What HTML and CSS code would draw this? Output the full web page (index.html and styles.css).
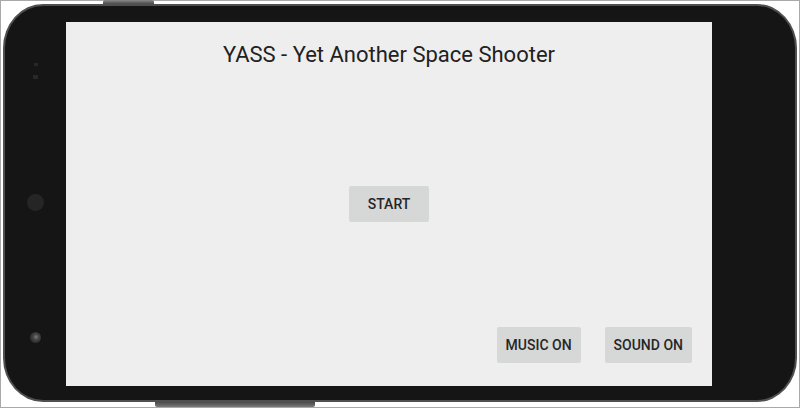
FILE: index.html
```html
<!DOCTYPE html>
<html lang="en">
<head>
<meta charset="utf-8">
<title>YASS</title>
<link rel="stylesheet" href="styles.css">
</head>
<body>
<div class="frame">
  <div class="phone">
    <span class="key key-top"></span>
    <span class="key key-bottom"></span>
    <div class="bezel-left">
      <span class="sensor sensor-a"></span>
      <span class="sensor sensor-b"></span>
      <span class="speaker"></span>
      <span class="camera"></span>
    </div>
    <div class="screen-wrap">
      <div class="screen">
        <h1 class="title">YASS - Yet Another Space Shooter</h1>
        <button class="btn btn-start">START</button>
        <div class="options">
          <button class="btn">MUSIC ON</button>
          <button class="btn">SOUND ON</button>
        </div>
      </div>
    </div>
    <div class="bezel-right"></div>
  </div>
</div>
</body>
</html>
```
FILE: styles.css
```css
* { box-sizing: border-box; }
html, body { margin: 0; padding: 0; background: #fff; }
body { width: 800px; height: 408px; overflow: hidden; font-family: Roboto, "Liberation Sans", sans-serif; }

.frame {
  width: 800px;
  height: 408px;
  border: 1px solid #a9a9a9;
  padding: 3px 0 0 2px;
}

.phone {
  position: relative;
  display: flex;
  width: 794px;
  height: 398px;
  background: #151515;
  border: 2px solid #505050;
  border-radius: 40px / 44px;
}

.key {
  position: absolute;
  background: #5c5c5c;
  z-index: 0;
}
.key-top {
  left: 98px;
  top: -6px;
  width: 51px;
  height: 4px;
  border-radius: 2px 2px 0 0;
  background: linear-gradient(#8a8a8a, #4a4a4a);
}
.key-bottom {
  left: 150px;
  bottom: -7px;
  width: 160px;
  height: 5px;
  border-radius: 0 0 2px 2px;
  background: linear-gradient(#4a4a4a, #7a7a7a);
}

.bezel-left {
  width: 61px;
  display: flex;
  flex-direction: column;
  align-items: center;
}
.sensor {
  display: block;
  background-image: radial-gradient(circle, #3c3c3c 45%, transparent 55%);
  background-size: 2px 2px;
}
.sensor-a { width: 4px; height: 3px; margin-top: 57px; }
.sensor-b { width: 5px; height: 4px; margin-top: 9px; }
.speaker {
  display: block;
  width: 17px;
  height: 17px;
  margin-top: 115px;
  border-radius: 50%;
  background-color: #1f1f1f;
  background-image: radial-gradient(circle, #3a3a3a 35%, transparent 55%);
  background-size: 2px 2px;
}
.camera {
  display: block;
  width: 11px;
  height: 11px;
  margin-top: 121px;
  border-radius: 50%;
  background: radial-gradient(circle at 55% 45%, #7a7a7a 0, #444 35%, #262626 80%);
}

.screen-wrap {
  padding: 16px 0 14px;
}
.screen {
  width: 646px;
  height: 364px;
  background: #eeeeee;
  display: grid;
  grid-template: 1fr / 1fr;
}
.screen > * { grid-area: 1 / 1; }

.title {
  margin: 0;
  padding-top: 20px;
  align-self: start;
  justify-self: center;
  font-family: Roboto, "Liberation Sans", sans-serif;
  font-weight: 400;
  font-size: 22px;
  line-height: 26px;
  color: #212121;
}

.btn {
  min-width: 80px;
  height: 36px;
  padding: 0 9px;
  border: none;
  border-radius: 2px;
  background: #d6d7d7;
  color: #262626;
  font-family: Roboto, "Liberation Sans", sans-serif;
  font-weight: 500;
  font-size: 14px;
  line-height: 36px;
}
.btn-start {
  align-self: center;
  justify-self: center;
}

.options {
  align-self: end;
  justify-self: end;
  display: flex;
  gap: 24px;
  padding: 0 20px 23px 0;
}

.bezel-right { width: 83px; }
```
